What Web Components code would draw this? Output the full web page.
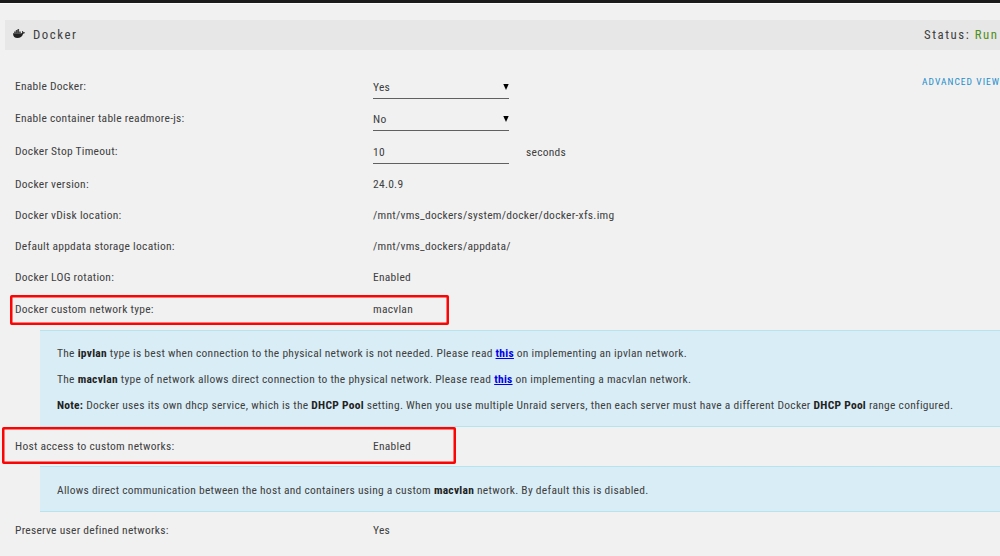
<!DOCTYPE html>
<html lang="en">
<head>
<meta charset="utf-8">
<title>Docker</title>
<style>
  html, body {
    margin: 0;
    height: 100%;
    overflow: hidden;
    background: #f1f1f1;
  }
  body {
    font: 11.5px/16px Roboto, "Open Sans", sans-serif;
    font-stretch: 87%;
    letter-spacing: 0.265px;
    color: #404040;
  }
</style>
</head>
<body>
<docker-settings></docker-settings>

<script>
class DockerIcon extends HTMLElement {
  constructor() {
    super();
    this.attachShadow({mode: "open"}).innerHTML = `
      <style>
        :host { display: block; width: 12px; height: 10px; }
        svg { display: block; }
      </style>
      <svg width="12" height="10" viewBox="0 0 12 10">
        <path fill="#222" d="M0 4.2H8.8C9.3 4 9.3 3.2 8.9 2.5L9.4 2C10 2.3 10.3 2.8 10.4 3.3C11 3.1 11.5 3.2 12 3.5C11.6 4.3 11 4.7 10.1 4.7C9.2 7.6 7.2 9 4.5 9C1.8 9 0 7.6 0 4.2Z"/>
        <path fill="#444" d="M1.1 2.5h1.6v1.6H1.1zM2.8 2.5h1.6v1.6H2.8zM4.5 2.5H6.1v1.6H4.5zM6.2 2.5h1.6v1.6H6.2zM2.8 1h1.6v1.4H2.8zM4.5 1H6.1v1.4H4.5zM4.5 0H6.1v.9H4.5z"/>
      </svg>
    `;
  }
}

class TitleBar extends HTMLElement {
  constructor() {
    super();
    this.attachShadow({mode: "open"}).innerHTML = `
      <style>
        :host {
          display: flex;
          align-items: center;
          height: 30px;
          margin: 16px 0 0 5px;
          padding-left: 8px;
          background: #e7e7e7;
          font-size: 12.8px;
          letter-spacing: 1.55px;
          white-space: nowrap;
        }
        docker-icon { margin: 0 8px 2px 0; }
        .status { display: block; width: 76px; margin-left: auto; }
      </style>
      <docker-icon></docker-icon>
      <slot></slot>
      <span class="status"><slot name="status"></slot></span>
    `;
  }
}

class SettingRow extends HTMLElement {
  constructor() {
    super();
    this.attachShadow({mode: "open"}).innerHTML = `
      <style>
        :host {
          display: flex;
          align-items: center;
          box-sizing: border-box;
          height: var(--row-height, 31.2px);
          padding: 0 0 1.6px 15px;
          white-space: nowrap;
        }
        .label { width: 358px; flex: none; }
        .value { display: flex; align-items: center; }
      </style>
      <span class="label"></span>
      <span class="value"><slot></slot></span>
    `;
    this.shadowRoot.querySelector(".label").textContent = this.getAttribute("label");
  }
}

class FormField extends HTMLElement {
  constructor() {
    super();
    const isSelect = this.hasAttribute("select");
    this.attachShadow({mode: "open"}).innerHTML = `
      <style>
        :host {
          display: flex;
          justify-content: space-between;
          box-sizing: border-box;
          width: 136px;
          height: 22px;
          margin-top: 4px;
          padding-top: 2px;
          border-bottom: 1px solid #606060;
        }
        svg { margin: 5px 0 0; }
      </style>
      <slot></slot>
      ${isSelect ? `<svg width="6" height="6" viewBox="0 0 6 6"><path d="M.3 0H5.7L3 6Z"/></svg>` : ""}
    `;
  }
}

class HelpBox extends HTMLElement {
  constructor() {
    super();
    this.attachShadow({mode: "open"}).innerHTML = `
      <style>
        :host {
          display: flex;
          flex-direction: column;
          justify-content: center;
          gap: 9.7px;
          box-sizing: border-box;
          height: var(--help-height);
          margin-left: 40px;
          padding: 1px 0 0 17px;
          background: #d9edf6;
          border-top: 1px solid #b5e3ee;
          border-bottom: 1px solid #b5e3ee;
          white-space: nowrap;
        }
      </style>
      <slot></slot>
    `;
  }
}

// Outline laid over a row; its place is given by x, y, w and h
class RedMark extends HTMLElement {
  constructor() {
    super();
    const [x, y, w, h] = ["x", "y", "w", "h"].map((name) => this.getAttribute(name));
    this.attachShadow({mode: "open"}).innerHTML = `
      <style>
        :host {
          position: absolute;
          left: ${x}px;
          top: ${y}px;
          width: ${w}px;
          height: ${h}px;
        }
        svg { display: block; }
      </style>
      <svg width="${w}" height="${h}">
        <rect x="1.25" y="1.25" width="${w - 2.5}" height="${h - 2.5}" rx=".5" fill="none" stroke="#fb0404" stroke-width="2.5"/>
      </svg>
    `;
  }
}

class DockerSettings extends HTMLElement {
  constructor() {
    super();
    this.attachShadow({mode: "open"}).innerHTML = `
      <style>
        :host { display: block; position: relative; height: 556px; overflow: hidden; }
        .top { height: 3px; background: #1c1b1c; border-bottom: 1px solid #fbfbfb; }
        .green { color: #4f8f1a; }
        .body { display: flex; flex-direction: column; padding-top: 20px; }
        .first { display: flex; justify-content: space-between; }
        .advanced {
          width: 78px;
          padding-top: 4px;
          color: #1c8dcb;
          font-size: 9.5px;
          letter-spacing: 1.05px;
          white-space: nowrap;
        }
        .tall { --row-height: 32.7px; }
        .unit { margin: 3px 0 0 17px; }
        .version { margin-top: 1px; }
        .types { --help-height: 97px; margin-top: 5.1px; }
        .host { --row-height: 39px; }
        .access { --help-height: 46px; }
        .preserve { --row-height: 37px; }
        a { color: #0000e8; font-weight: bold; }
        b { color: #222; }
        p { margin: 0; }
      </style>
      <div class="top"></div>
      <title-bar>Docker<span slot="status">Status: <span class="green">Run</span></span></title-bar>
      <div class="body">
        <div class="first">
          <setting-row class="tall" label="Enable Docker:"><form-field select>Yes</form-field></setting-row>
          <span class="advanced">ADVANCED VIEW</span>
        </div>
        <setting-row class="tall" label="Enable container table readmore-js:"><form-field select>No</form-field></setting-row>
        <setting-row class="tall" label="Docker Stop Timeout:"><form-field>10</form-field><span class="unit">seconds</span></setting-row>
        <setting-row class="version" label="Docker version:">24.0.9</setting-row>
        <setting-row label="Docker vDisk location:">/mnt/vms_dockers/system/docker/docker-xfs.img</setting-row>
        <setting-row label="Default appdata storage location:">/mnt/vms_dockers/appdata/</setting-row>
        <setting-row label="Docker LOG rotation:">Enabled</setting-row>
        <setting-row label="Docker custom network type:">macvlan</setting-row>
        <help-box class="types">
          <p>The <b>ipvlan</b> type is best when connection to the physical network is not needed. Please read <a href="#">this</a> on implementing an ipvlan network.</p>
          <p>The <b>macvlan</b> type of network allows direct connection to the physical network. Please read <a href="#">this</a> on implementing a macvlan network.</p>
          <p><b>Note:</b> Docker uses its own dhcp service, which is the <b>DHCP Pool</b> setting. When you use multiple Unraid servers, then each server must have a different Docker <b>DHCP Pool</b> range configured.</p>
        </help-box>
        <setting-row class="host" label="Host access to custom networks:">Enabled</setting-row>
        <help-box class="access">
          <p>Allows direct communication between the host and containers using a custom <b>macvlan</b> network. By default this is disabled.</p>
        </help-box>
        <setting-row class="preserve" label="Preserve user defined networks:">Yes</setting-row>
      </div>
      <red-mark x="10" y="295" w="439" h="30"></red-mark>
      <red-mark x="2" y="427" w="454" h="37"></red-mark>
    `;
  }
}

customElements.define("docker-icon", DockerIcon);
customElements.define("title-bar", TitleBar);
customElements.define("setting-row", SettingRow);
customElements.define("form-field", FormField);
customElements.define("help-box", HelpBox);
customElements.define("red-mark", RedMark);
customElements.define("docker-settings", DockerSettings);
</script>
</body>
</html>
